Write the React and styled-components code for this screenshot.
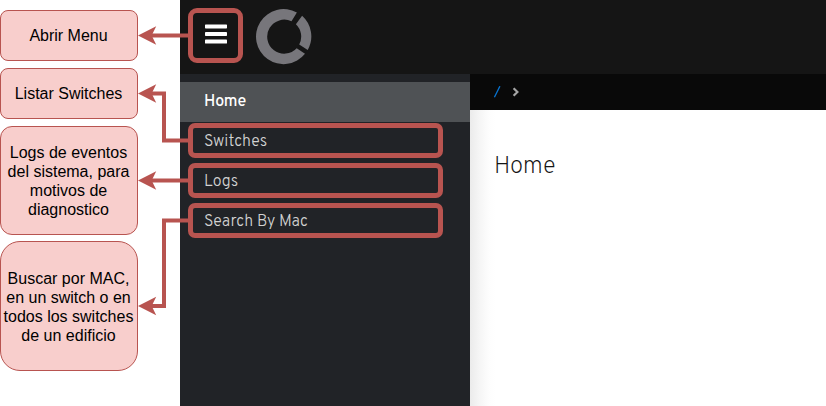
import React from 'react';
import styled, { createGlobalStyle } from 'styled-components';

const GlobalStyle = createGlobalStyle`
  * { box-sizing: border-box; }
  body { margin: 0; background: #fff; overflow: hidden; }
`;

const Page = styled.div`
  position: relative;
  display: flex;
  width: 826px;
  height: 406px;
  overflow: hidden;
`;

const Notes = styled.aside`
  display: flex;
  flex-direction: column;
  width: 180px;
  padding-top: 10px;
  gap: 7px;
`;

const Note = styled.div`
  display: flex;
  align-items: center;
  justify-content: center;
  width: 138px;
  height: ${(p) => p.$height}px;
  padding-right: 1px;
  border: 1px solid #b85450;
  border-radius: ${(p) => p.$radius}px;
  background: #f8cecc;
  color: #000;
  font: 16px/19px 'Liberation Sans', Arial, sans-serif;
  text-align: center;
  white-space: pre;

  &:last-child {
    margin-top: -1px;
    padding-top: 2px;
  }
`;

const Application = styled.div`
  display: flex;
  flex-direction: column;
  width: 646px;
  font-family: Overpass, Roboto, sans-serif;
`;

const TopBar = styled.header`
  display: flex;
  align-items: flex-start;
  height: 74px;
  padding: 8px;
  gap: 13px;
  background: #151515;
`;

const MenuButton = styled.button`
  display: flex;
  justify-content: center;
  width: 55px;
  height: 55px;
  padding: 11px 0 0 1px;
  border: 5px solid #b85450;
  border-radius: 9px;
  background: transparent;
`;

const Logo = styled.svg`
  width: 56px;
  height: 57px;
`;

const Body = styled.div`
  display: flex;
  flex: 1;
`;

const Sidebar = styled.nav`
  display: flex;
  flex-direction: column;
  width: 290px;
  padding-top: 8px;
  background: #212327;
`;

const ActiveItem = styled.a`
  display: flex;
  align-items: center;
  height: 40px;
  margin-bottom: 1px;
  padding: 0 24px 1px;
  background: #4f5255;
  color: #fff;
  font-size: 16px;
  font-weight: 500;
`;

const Item = styled.a`
  display: flex;
  align-items: center;
  width: 255px;
  height: 35px;
  margin: 0 0 5px 8px;
  padding: 2px 11px 0;
  border: 5px solid #b85450;
  border-radius: 7px;
  color: #d2d2d2;
  font-size: 16px;
  font-weight: 300;
`;

const Label = styled.span`
  letter-spacing: ${(p) => p.$spacing}px;
  white-space: nowrap;
`;

const Main = styled.main`
  display: flex;
  flex-direction: column;
  flex: 1;
`;

const Breadcrumb = styled.div`
  display: flex;
  align-items: center;
  height: 36px;
  padding-left: 23px;
  gap: 11px;
  background: #090909;
`;

const Content = styled.section`
  flex: 1;
  padding: 41px 24px;
  background: linear-gradient(to right, #ebebeb 0, #f5f5f5 9px, #fdfdfd 19px, #fff 25px);
`;

const Title = styled.h1`
  margin: 0;
  color: #151515;
  font-size: 24px;
  font-weight: 200;
  line-height: 32px;
  letter-spacing: -0.3px;
`;

const Arrows = styled.svg`
  position: absolute;
  top: 0;
  left: 0;
  pointer-events: none;
`;

const notes = [
  { text: 'Abrir Menu', height: 51, radius: 8 },
  { text: 'Listar Switches', height: 51, radius: 8 },
  { text: 'Logs de eventos\ndel sistema, para\nmotivos de\ndiagnostico', height: 109, radius: 12 },
  { text: 'Buscar por MAC,\nen un switch o en\ntodos los switches\nde un edificio', height: 130, radius: 20 },
];

const items = [
  { text: 'Switches', spacing: 0.03 },
  { text: 'Logs', spacing: 0 },
  { text: 'Search By Mac', spacing: 0.06 },
];

const arrowTips = [35.5, 93.5, 180.5, 306];

export default function App() {
  return (
    <Page>
      <GlobalStyle />
      <Notes>
        {notes.map((n) => (
          <Note key={n.text} $height={n.height} $radius={n.radius}>{n.text}</Note>
        ))}
      </Notes>
      <Application>
        <TopBar>
          <MenuButton aria-label="Menu">
            <svg width="22" height="20" viewBox="0 0 22 20" fill="#fff">
              <rect y="0.4" width="22" height="4" rx="0.7" />
              <rect y="8" width="22" height="4" rx="0.7" />
              <rect y="15.6" width="22" height="4" rx="0.7" />
            </svg>
          </MenuButton>
          <Logo viewBox="256 8 56 57" fill="#77767b">
            <path d="M296.9 12.6A27.5 27.5 0 1 0 305 53.8L296.7 48.2A17 17 0 1 1 291.5 21.3Z" />
            <path d="M302.1 15.8A27.5 27.5 0 0 1 307.7 50L299.2 44.5A17 17 0 0 0 295.9 24.2Z" />
          </Logo>
        </TopBar>
        <Body>
          <Sidebar>
            <ActiveItem><Label $spacing={-0.2}>Home</Label></ActiveItem>
            {items.map((i) => (
              <Item key={i.text}><Label $spacing={i.spacing}>{i.text}</Label></Item>
            ))}
          </Sidebar>
          <Main>
            <Breadcrumb>
              <svg width="8" height="12" viewBox="0 0 8 12">
                <path d="M1.4 11.2L6.9 0.2" stroke="#0874d1" strokeWidth="1.3" />
              </svg>
              <svg width="7" height="10" viewBox="0 0 7 10">
                <path d="M1.6 1.2L5.4 5L1.6 8.8" fill="none" stroke="#a5a5a5" strokeWidth="2.2" />
              </svg>
            </Breadcrumb>
            <Content><Title>Home</Title></Content>
          </Main>
        </Body>
      </Application>
      <Arrows width="826" height="406" viewBox="0 0 826 406">
        <g fill="none" stroke="#b85450" strokeWidth="4">
          <path d="M150 35.5H189" />
          <path d="M150 93.5H164V140.5H189" />
          <path d="M150 180.5H189" />
          <path d="M150 306H164V220.5H189" />
        </g>
        {arrowTips.map((y) => (
          <path key={y} d={`M138 ${y}L156.2 ${y - 9.2}L151.7 ${y}L156.2 ${y + 9.2}Z`} fill="#b85450" />
        ))}
      </Arrows>
    </Page>
  );
}
